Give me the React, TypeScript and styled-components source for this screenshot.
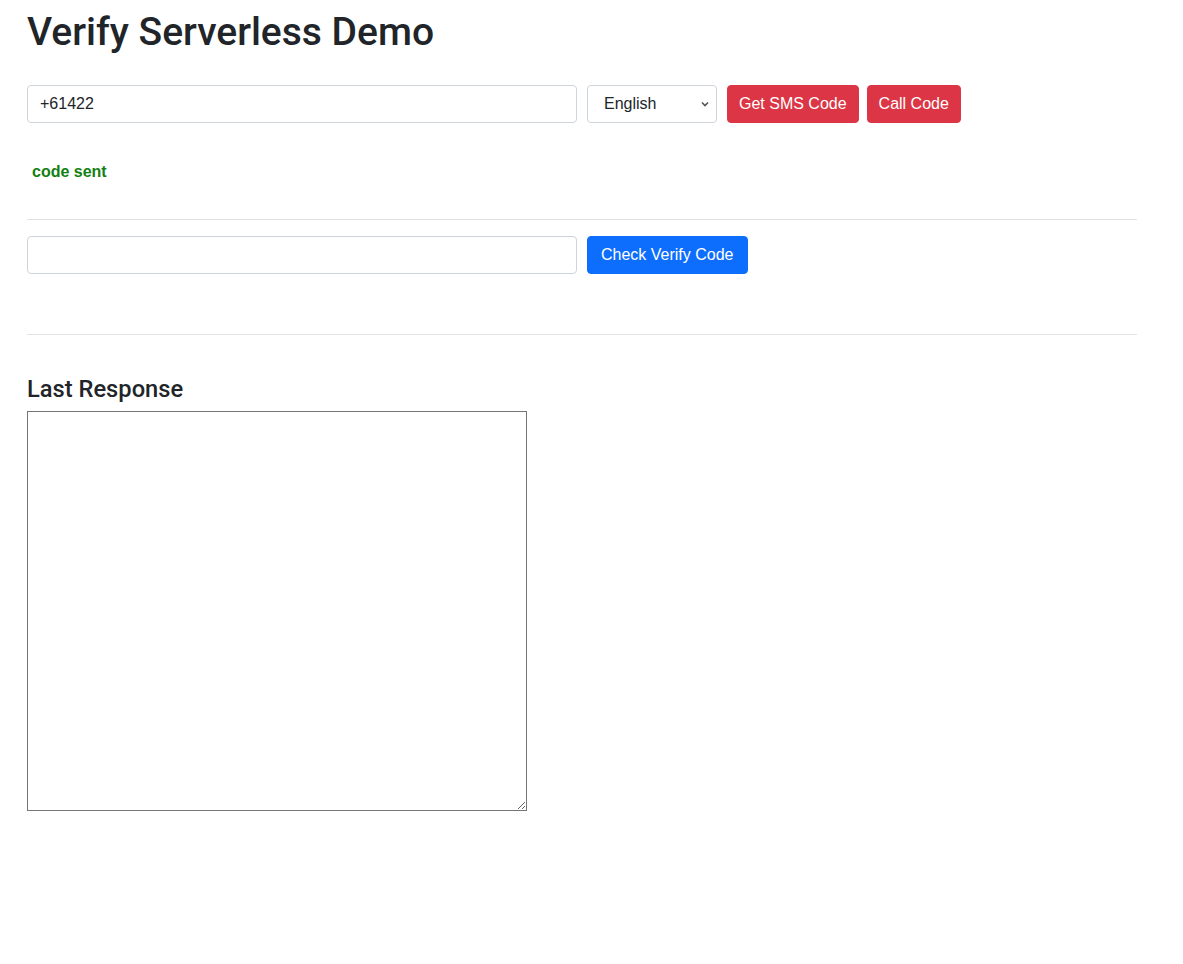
import styled, { createGlobalStyle } from "styled-components";

const GlobalStyle = createGlobalStyle`
  body {
    margin: 0;
    background: #fff;
    color: #212529;
    font-family: "Liberation Sans", Arial, sans-serif;
    font-size: 16px;
    line-height: 1.5;
  }
`;

const Page = styled.div`
  width: 1110px;
  padding: 8px 0 0 27px;
`;

const Title = styled.h1`
  margin: 0 0 29px;
  font-family: Roboto, "Liberation Sans", sans-serif;
  font-size: 39px;
  font-weight: 500;
  line-height: 48px;
`;

const Row = styled.div`
  display: flex;
  align-items: center;
`;

const TextField = styled.input`
  box-sizing: border-box;
  width: 550px;
  height: 38px;
  margin-right: 10px;
  padding: 6px 12px;
  border: 1px solid #ced4da;
  border-radius: 4px;
  font: inherit;
  color: #212529;
  background: #fff;
  outline: none;
`;

const chevron =
  "data:image/svg+xml,%3csvg xmlns='http://www.w3.org/2000/svg' viewBox='0 0 8 6'%3e%3cpath fill='none' stroke='%23555' stroke-width='1.6' d='M1 1.5l3 3 3-3'/%3e%3c/svg%3e";

const LangSelect = styled.select`
  box-sizing: border-box;
  width: 130px;
  height: 38px;
  margin-right: 10px;
  padding: 6px 24px 6px 16px;
  border: 1px solid #ced4da;
  border-radius: 4px;
  font: inherit;
  color: #212529;
  background: #fff url("${chevron}") no-repeat right 7px center / 8px 6px;
  appearance: none;
`;

const Button = styled.button<{ $tone: "danger" | "primary" }>`
  height: 38px;
  margin-right: 8px;
  padding: 6px ${({ $tone }) => ($tone === "danger" ? 11 : 13)}px;
  border: 1px solid ${({ $tone }) => ($tone === "danger" ? "#dc3545" : "#0d6efd")};
  border-radius: 4px;
  background: ${({ $tone }) => ($tone === "danger" ? "#dc3545" : "#0d6efd")};
  color: #fff;
  font: inherit;
  cursor: pointer;
`;

const Status = styled.p`
  margin: 37px 0 0 5px;
  color: #138013;
  font-weight: 700;
  line-height: 24px;
`;

const Rule = styled.hr<{ $gap: number }>`
  margin: ${({ $gap }) => $gap}px 0 16px;
  border: 0;
  border-top: 1px solid #e1e2e3;
`;

const Heading = styled.h4`
  margin: 40px 0 7px;
  font-family: Roboto, "Liberation Sans", sans-serif;
  font-size: 23.7px;
  font-weight: 500;
  line-height: 29px;
`;

const Response = styled.textarea`
  display: block;
  box-sizing: border-box;
  width: 500px;
  height: 400px;
  margin: 0;
  border: 1px solid #767676;
  border-radius: 0;
  font-family: "Liberation Mono", monospace;
`;

export default function App() {
  return (
    <>
      <GlobalStyle />
      <Page>
        <Title>Verify Serverless Demo</Title>
        <Row>
          <TextField defaultValue="+61422" />
          <LangSelect defaultValue="en">
            <option value="en">English</option>
          </LangSelect>
          <Button $tone="danger">Get SMS Code</Button>
          <Button $tone="danger">Call Code</Button>
        </Row>
        <Status>code sent</Status>
        <Rule $gap={35} />
        <Row>
          <TextField />
          <Button $tone="primary">Check Verify Code</Button>
        </Row>
        <Rule $gap={60} />
        <Heading>Last Response</Heading>
        <Response />
      </Page>
    </>
  );
}
